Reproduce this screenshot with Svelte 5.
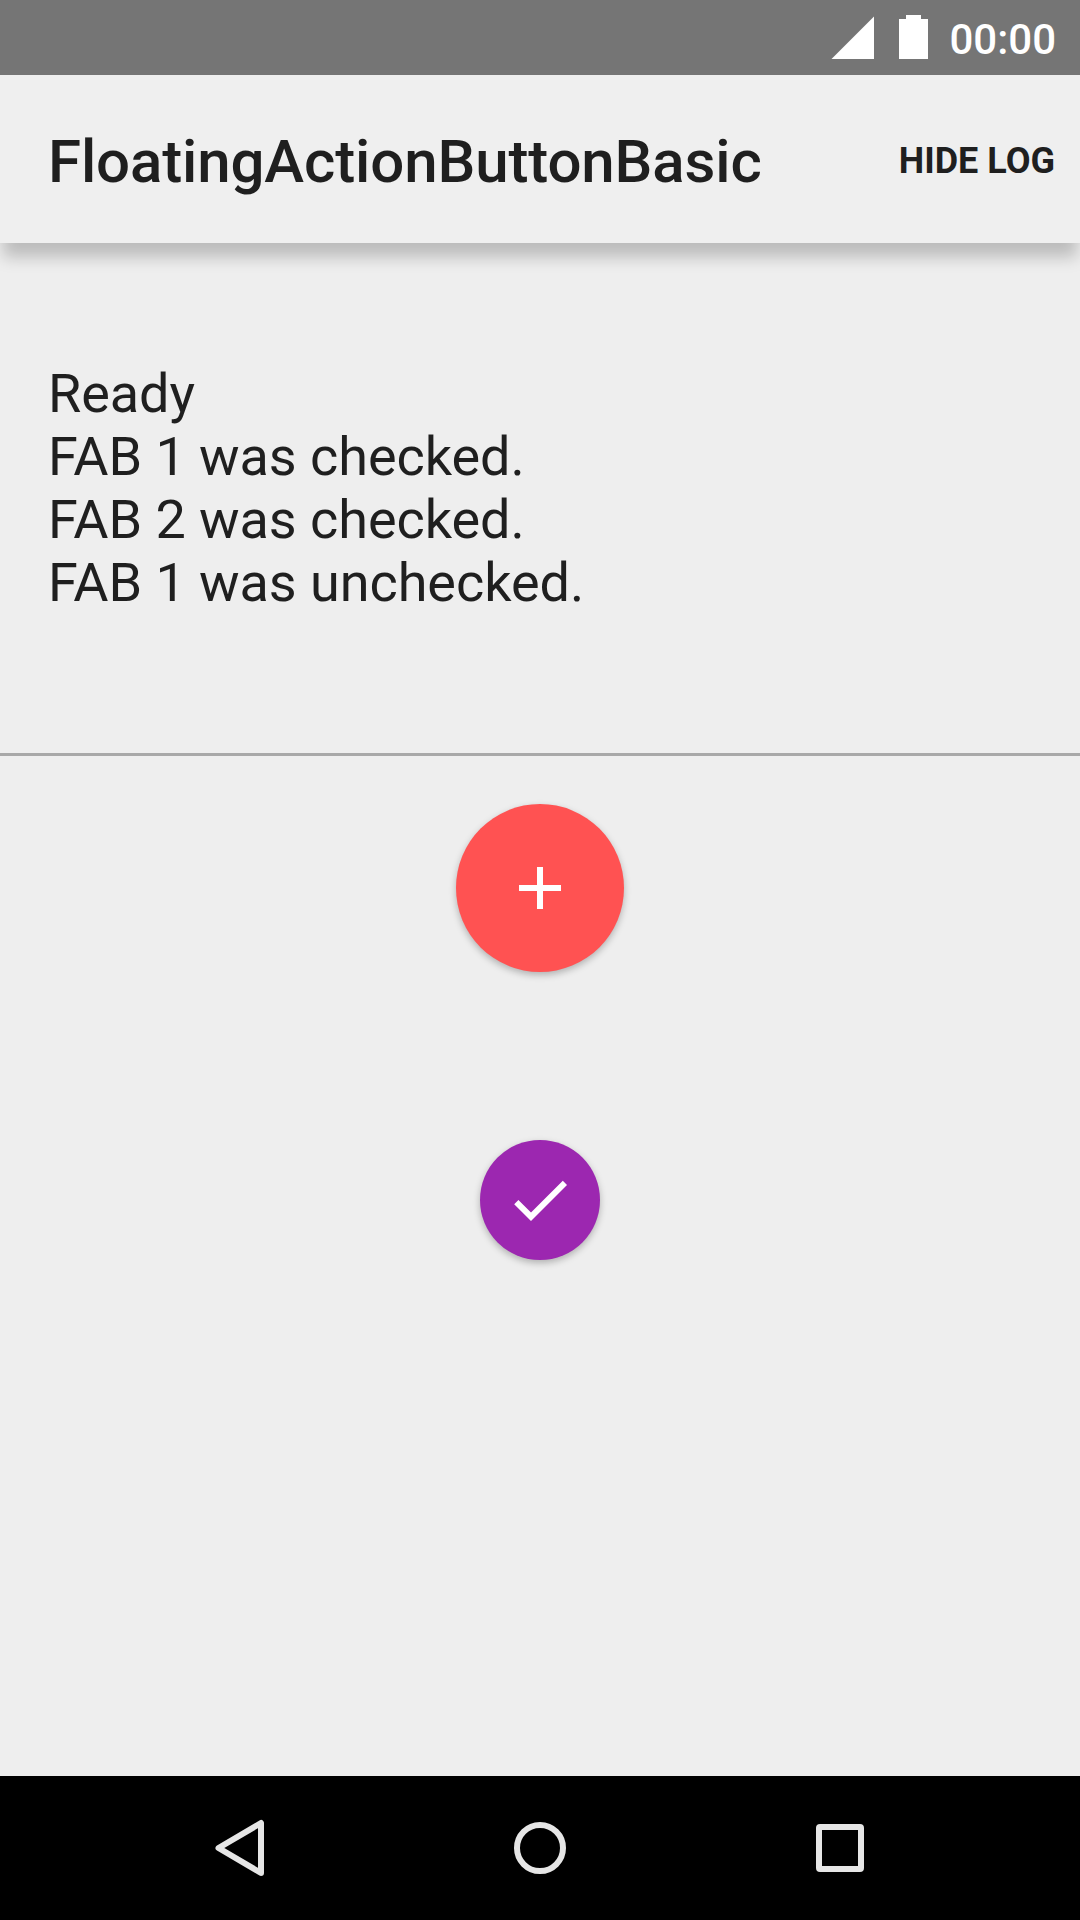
<script>
  const log = [
    'Ready',
    'FAB 1 was checked.',
    'FAB 2 was checked.',
    'FAB 1 was unchecked.'
  ];
</script>

<div class="screen">
  <div class="status">
    <svg class="signal" width="43" height="43" viewBox="0 0 43 43"><path d="M43 0.500V43H0.500Z" fill="#fff" /></svg>
    <svg class="battery" width="29" height="44" viewBox="0 0 29 44"><path d="M7 0H22V4H29V44H0V4H7Z" fill="#fff" /></svg>
    <span class="time">00:00</span>
  </div>

  <header class="bar">
    <h1>FloatingActionButtonBasic</h1>
    <button class="action">HIDE LOG</button>
  </header>

  <section class="log">
    {#each log as line}
      <p>{line}</p>
    {/each}
  </section>

  <main>
    <button class="fab large" aria-label="Add">
      <svg width="72" height="72" viewBox="0 0 24 24"><path d="M19 13h-6v6h-2v-6H5v-2h6V5h2v6h6v2z" fill="#fff" /></svg>
    </button>
    <button class="fab small" aria-label="Done">
      <svg width="72" height="72" viewBox="0 0 24 24"><path d="M9 16.2L4.8 12l-1.4 1.4L9 19 21 7l-1.4-1.4L9 16.2z" fill="#fff" /></svg>
    </button>
  </main>

  <nav>
    <svg viewBox="0 0 72 72"><path d="M14.500 36 57 11V61Z" fill="none" stroke="#e6e6e6" stroke-width="6" stroke-linejoin="round" /></svg>
    <svg viewBox="0 0 72 72"><circle cx="36" cy="36" r="23" fill="none" stroke="#e6e6e6" stroke-width="6" /></svg>
    <svg viewBox="0 0 72 72"><path fill-rule="evenodd" d="M16 12H56a4 4 0 0 1 4 4V56a4 4 0 0 1-4 4H16a4 4 0 0 1-4-4V16a4 4 0 0 1 4-4ZM18 18V54H54V18Z" fill="#e6e6e6" /></svg>
  </nav>
</div>

<style>
  :global(body) {
    margin: 0;
  }
  .screen {
    width: 1080px;
    height: 1920px;
    display: flex;
    flex-direction: column;
    overflow: hidden;
    background: #eee;
    color: #1f1f1f;
    font-family: Roboto, sans-serif;
  }
  .status {
    box-sizing: border-box;
    height: 75px;
    flex: none;
    display: flex;
    align-items: flex-start;
    padding: 15px 24px 0 0;
    justify-content: flex-end;
    background: #757575;
    color: #fff;
  }
  .signal {
    margin: 1px 25px 0 0;
  }
  .battery {
    margin-right: 21px;
  }
  .time {
    font-size: 42px;
    font-weight: 500;
    line-height: 50px;
  }
  .bar {
    box-sizing: border-box;
    position: relative;
    height: 168px;
    flex: none;
    display: flex;
    align-items: center;
    justify-content: space-between;
    padding: 0 25px 0 48px;
    background: #efefef;
    box-shadow: 0 17px 15px -3px rgba(0, 0, 0, 0.21);
  }
  h1 {
    margin: 0;
    padding-top: 5px;
    font-size: 60px;
    font-weight: 500;
    line-height: 70px;
    letter-spacing: -0.13px;
  }
  button {
    border: 0;
    padding: 0;
    font-family: inherit;
    color: inherit;
  }
  .action {
    background: none;
    padding-top: 3px;
    font-size: 36px;
    font-weight: 700;
    line-height: 42px;
  }
  .log {
    box-sizing: border-box;
    height: 513px;
    flex: none;
    padding: 119px 48px 0;
    border-bottom: 3px solid #a8a8a8;
  }
  p {
    margin: 0;
    font-size: 54px;
    line-height: 63px;
    letter-spacing: -0.06px;
  }
  main {
    flex: 1;
    display: flex;
    flex-direction: column;
    align-items: center;
    gap: 168px;
    padding-top: 48px;
  }
  .fab {
    display: flex;
    align-items: center;
    justify-content: center;
    border-radius: 50%;
    box-shadow: 0 3px 7px rgba(0, 0, 0, 0.26);
  }
  .large {
    width: 168px;
    height: 168px;
    background: #ff5252;
  }
  .small {
    width: 120px;
    height: 120px;
    background: #9c27b0;
  }
  nav {
    height: 144px;
    flex: none;
    display: flex;
    align-items: center;
    justify-content: center;
    gap: 228px;
    background: #000;
  }
  nav svg {
    width: 72px;
    height: 72px;
  }
</style>
